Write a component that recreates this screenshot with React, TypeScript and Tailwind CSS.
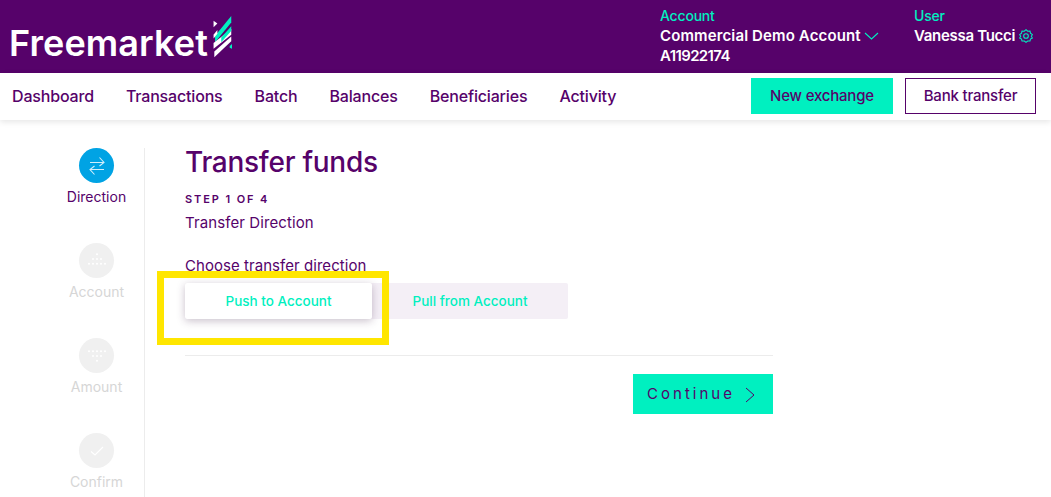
import React from 'react';

const NAV_ITEMS = ['Dashboard', 'Transactions', 'Batch', 'Balances', 'Beneficiaries', 'Activity'];

const LogoMark = () => (
  <svg width="20" height="43" viewBox="0 0 26 46" preserveAspectRatio="none" className="ml-[4px] mt-[-10px] shrink-0">
    <path d="M2 5 L7 8 L2 12 Z" fill="#fff" />
    <path d="M4 21 L25 0 V7 L4 28 Z" fill="#00f0c0" />
    <path d="M2 20 L7 15 L7 19 L2 24 Z" fill="#fff" />
    <path d="M2 29 L25 14 V20 L2 35 Z" fill="#fff" />
    <path d="M12 23 L25 11 V16 L12 28 Z" fill="#00f0c0" />
    <path d="M3 38 L25 22 V27 L3 44 Z" fill="#fff" />
    <path d="M23 32 L26 30 V35 L23 34 Z" fill="#00f0c0" />
  </svg>
);

const Dots = ({ flip }: { flip?: boolean }) => {
  const rows = [[0], [-1, 0, 1], [-2, -1, 0, 1, 2]];
  return (
    <svg width="20" height="12" viewBox="-10 0 20 12" className={flip ? 'rotate-180' : 'mt-[-3px]'}>
      {rows.map((row, y) =>
        row.map((x) => <circle key={`${x}-${y}`} cx={x * 4} cy={1.3 + y * 4.7} r="1" fill="#fff" />),
      )}
    </svg>
  );
};

const STEPS = [
  {
    label: 'Direction',
    active: true,
    icon: (
      <svg width="18" height="20" viewBox="0 0 18 20" fill="none" stroke="#cfeefb" strokeWidth="1.1">
        <path d="M2 6.5 H16 M11.5 1.5 L16 6.5 L11.5 10" />
        <path d="M16 13.5 H2 M6.5 10 L2 13.5 L6.5 18.5" />
      </svg>
    ),
  },
  { label: 'Account', icon: <Dots /> },
  { label: 'Amount', icon: <Dots flip /> },
  {
    label: 'Confirm',
    icon: (
      <svg width="16" height="12" viewBox="0 0 16 12" fill="none" stroke="#fff" strokeWidth="1.1">
        <path d="M2 6.5 L6 10 L14 2" />
      </svg>
    ),
  },
];

export default function App() {
  return (
    <div className="relative h-[497px] w-[1051px] overflow-hidden bg-white font-['Inter',sans-serif]">
      {/* Header */}
      <header className="flex h-[73px] justify-between bg-[#56026a]">
        <div className="flex items-center pl-[9px] pt-[12px]">
          <span className="text-[36px] font-semibold leading-none tracking-[0.1px] text-white">Freemarket</span>
          <LogoMark />
        </div>
        <div className="flex pt-[6px] text-[15px] font-semibold leading-[20px] text-white">
          <div className="w-[254px]">
            <p className="text-[14px] font-medium tracking-[-0.2px] text-[#00f0c0]">Account</p>
            <p className="flex items-center gap-[3px] tracking-[0.13px]">
              Commercial Demo Account
              <svg width="15" height="8" viewBox="0 0 15 8" fill="none" stroke="#00f0c0" strokeWidth="1.1">
                <path d="M1 1 L7.5 7 L14 1" />
              </svg>
            </p>
            <p className="tracking-[-0.6px]">A11922174</p>
          </div>
          <div className="w-[137px]">
            <p className="text-[14px] font-medium tracking-[-0.2px] text-[#00f0c0]">User</p>
            <p className="flex items-center gap-[3px] tracking-[-0.3px]">
              Vanessa Tucci
              <svg width="16" height="16" viewBox="0 0 24 24" fill="none" stroke="#00f0c0" strokeWidth="1.6">
                <circle cx="12" cy="12" r="3.5" />
                <path d="M12 2.5 L14.5 4.8 L18 4.5 L18.7 7.8 L21.5 10 L20 12.5 L21.5 15 L18.7 16.5 L18 19.6 L14.5 19.5 L12 21.5 L9.5 19.5 L6 19.6 L5.3 16.5 L2.5 15 L4 12.5 L2.5 10 L5.3 7.8 L6 4.5 L9.5 4.8 Z" />
              </svg>
            </p>
          </div>
        </div>
      </header>

      {/* Nav */}
      <nav className="relative flex h-[47px] items-center justify-between bg-white pb-px pl-[12px] pr-[15px] shadow-[0_2px_6px_rgba(0,0,0,0.1)]">
        <div className="flex gap-[32px] text-[16px] font-medium tracking-[-0.17px] text-[#56026a]">
          {NAV_ITEMS.map((item) => (
            <span key={item}>{item}</span>
          ))}
        </div>
        <div className="flex gap-[12px] text-[15px] font-medium tracking-[-0.2px] text-[#56026a]">
          <button className="h-[36px] w-[142px] bg-[#00f0c0]">New exchange</button>
          <button className="h-[36px] w-[131px] border border-[#56026a] bg-white">Bank transfer</button>
        </div>
      </nav>

      {/* Body */}
      <div className="flex pl-[48px] pt-[28px]">
        <aside className="flex h-[349px] w-[97px] flex-col gap-[60px] border-r border-[#ececec] pl-[1px]">
          {STEPS.map((step) => (
            <div key={step.label} className="flex h-[35px] flex-col items-center">
              <div
                className={`flex h-[35px] w-[35px] shrink-0 items-center justify-center rounded-full ${
                  step.active ? 'bg-[#00a3e4]' : 'bg-[#f0f0f0]'
                }`}
              >
                {step.icon}
              </div>
              <span
                className={`mt-[6px] text-[14px] leading-[16px] ${step.active ? 'text-[#56026a]' : 'text-[#d6d6d6]'}`}
              >
                {step.label}
              </span>
            </div>
          ))}
        </aside>

        <main className="ml-[40px] w-[588px]">
          <h1 className="mt-[-4px] text-[28px] font-medium leading-[36px] tracking-[-0.27px] text-[#56026a]">
            Transfer funds
          </h1>
          <p className="mt-[11px] text-[11px] font-semibold leading-[16px] tracking-[1.9px] text-[#56026a]">
            STEP 1 OF 4
          </p>
          <p className="mt-[8px] text-[15px] leading-[16px] tracking-[0.1px] text-[#56026a]">Transfer Direction</p>
          <p className="mt-[27px] text-[15px] leading-[16px] tracking-[0.05px] text-[#56026a]">
            Choose transfer direction
          </p>

          <div className="mt-[9px] flex h-[36px] w-[383px] rounded-[2px] bg-[#f4eff6] text-[13.5px] font-medium text-[#00f0c0]">
            <button className="h-[36px] w-[187px] rounded-[2px] bg-white shadow-[0_2px_8px_rgba(60,30,70,0.28)]">
              Push to Account
            </button>
            <button className="h-[36px] w-[196px]">Pull from Account</button>
          </div>

          <div className="mt-[36px] border-t border-[#ececec]" />
          <div className="mt-[18px] flex justify-end">
            <button className="flex h-[40px] w-[140px] items-center justify-center gap-[10px] bg-[#00f0c0] pr-[4px] pt-px text-[15px] tracking-[3px] text-[#56026a]">
              Continue
              <svg width="10" height="16" viewBox="0 0 10 16" fill="none" stroke="#56026a" strokeWidth="1">
                <path d="M1 1 L9 8 L1 15" />
              </svg>
            </button>
          </div>
        </main>
      </div>

      {/* Highlight box drawn over the screenshot */}
      <div className="absolute left-[157px] top-[271px] h-[74px] w-[232px] border-[7px] border-[#ffe600]" />
    </div>
  );
}
